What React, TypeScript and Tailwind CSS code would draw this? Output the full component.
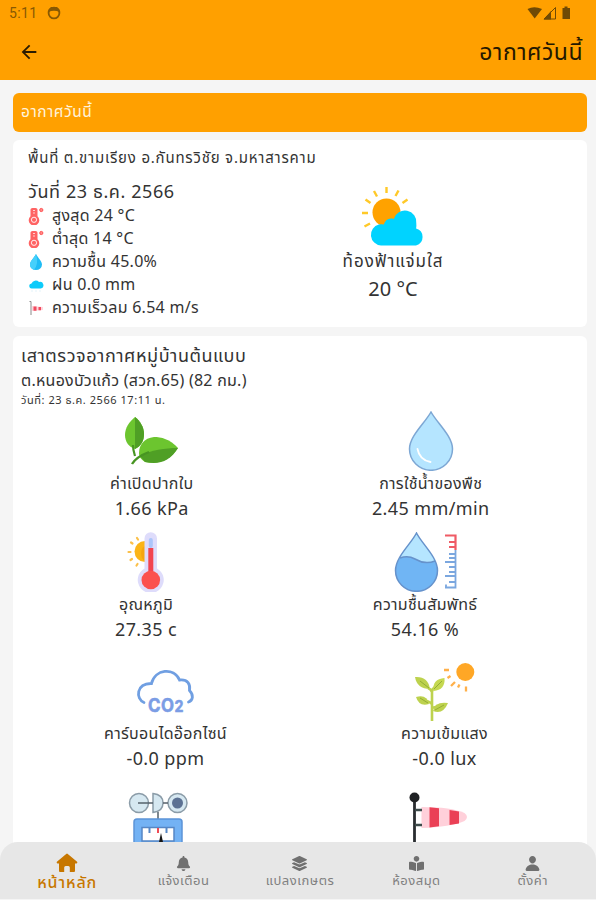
import type { ReactNode } from "react";
import { FaBell, FaBookReader, FaLayerGroup } from "react-icons/fa";
import { IoPerson } from "react-icons/io5";
import { MdArrowBack } from "react-icons/md";

function StatusBar() {
  return (
    <div className="flex h-[26px] items-center pl-[9px] pr-6 text-[#885903]">
      <span className="font-['Roboto',sans-serif] text-[14px] tracking-[0.4px]">5:11</span>
      <svg viewBox="0 0 14 14" className="ml-[9px] size-[14px]">
        <circle cx="7" cy="7" r="5.4" fill="none" stroke="currentColor" strokeWidth="1.8" />
        <path d="M1.500 6V3.500L4 1h6l2.500 2.500V6Q7 3.500 1.500 6Z" fill="currentColor" />
      </svg>
      <svg viewBox="0 0 46 16" className="ml-auto mr-[-1px] h-4 w-[46px] text-[#704a05]">
        <path d="M0.500 4Q7 .500 15 4L7.700 13.500Z" fill="currentColor" />
        <path d="M17 14 28.500 2.500V14Z" fill="none" stroke="currentColor" strokeWidth="1" />
        <path d="M16.500 14.500 24 6V14.500Z" fill="currentColor" />
        <path d="M35.500 3h2V1.500h3V3h2.500V14H35.500Z" fill="currentColor" />
      </svg>
    </div>
  );
}

function Header() {
  return (
    <header className="h-20 shrink-0 bg-[#ffa000]">
      <StatusBar />
      <div className="flex h-[51px] items-center justify-between pl-[18px] pr-[13px]">
        <MdArrowBack className="size-[22px] text-[#2b1c00]" />
        <h1 className="text-[23px] tracking-[0.5px] text-[#241800]">อากาศวันนี้</h1>
      </div>
    </header>
  );
}

function ThermoSmall() {
  return (
    <svg viewBox="0 0 16 18" className="size-full">
      <path d="M2.500 2.500Q2.500 1 4.500 1h3q2 0 2 1.500V9.200a5.300 5.300 0 1 1-7 0Z" fill="#ff6363" />
      <path d="M5 3.500h2M5 6h2" stroke="#ffd0d0" strokeWidth="1" />
      <circle cx="6" cy="12.800" r="2.600" fill="none" stroke="#fff" strokeWidth=".9" />
      <circle cx="13.300" cy="3" r="1.600" fill="#ff8a8a" stroke="#ff5252" />
    </svg>
  );
}

function DropSmall() {
  return (
    <svg viewBox="0 0 16 18" className="size-full">
      <path d="M8 1C6 5 2 8 2 11.500a6 5.500 0 0 0 12 0C14 8 10 5 8 1Z" fill="#1fbcf5" />
      <path d="M8 1C6 5 2 8 2 11.500a6 5.500 0 0 0 4 5.200Q11 11 8 1Z" fill="#45d0fb" />
    </svg>
  );
}

function CloudSmall() {
  return (
    <svg viewBox="0 0 16 18" className="size-full">
      <path d="M4 12.500a2.500 2.500 0 0 1-.5-5A4.500 4.500 0 0 1 11 6a3.300 3.300 0 0 1 2 6.500Z" fill="#0ecbfa" />
      <path d="M4 14v2M8 14v2M12 14v2" stroke="#e3f3fa" strokeWidth="1" />
    </svg>
  );
}

function WindSmall() {
  return (
    <svg viewBox="0 0 16 18" className="size-full">
      <path d="M1.500 2.500H3V16" fill="none" stroke="#8a8a8a" strokeWidth="1" />
      <path d="M4 7 15 8v3L4 12Z" fill="#ffd5dc" />
      <path d="M5.500 7.500h3v4.300h-3ZM10.500 8h2.500v3.300h-2.500Z" fill="#f04a5e" />
    </svg>
  );
}

function PartlyCloudy() {
  return (
    <svg viewBox="0 0 62 60" className="h-[60px] w-[62px]">
      <path
        d="M24.500 0v6M36.500 3.500l-3 5.500M45.500 12.500l-5 3.500M12 4l3 5.500M3.500 12.500l5 3.500M0 26h6M2.500 39.500l5.500-3"
        stroke="#ffc928"
        strokeWidth="2.400"
      />
      <circle cx="24.500" cy="25.500" r="14" fill="#ffa200" />
      <path
        d="M19 58.500a10.700 10.700 0 0 1-2.200-21q2.500-.6 5 0c1.500-5 5.500-7 10-5.500a11.500 11.500 0 0 1 22.500 4.500q.3 2.500-.2 5a8.800 8.800 0 0 1-.1 17Z"
        fill="#00d3ff"
      />
    </svg>
  );
}

function LeavesIcon() {
  return (
    <svg viewBox="0 0 60 60" className="size-full overflow-visible">
      <path d="M13 6C7 11 3 17 3 24c0 7 4 12 10 14 6-3 9-8 9-15C22 16 18 10 13 6Z" fill="#6cc52f" />
      <path d="M13 6C18 10 22 16 22 23c0 7-3 12-9 15Z" fill="#4f9f25" />
      <path d="M11 34q0 5 2 11" fill="none" stroke="#479522" strokeWidth="2.200" />
      <path d="M56 37C48 28 39 26 32 26c-10 1-15 8-15 16 0 4 2 6 6 9 14 3 26-3 33-14Z" fill="#6cc52f" />
      <path d="M56 37C48 50 38 54 23 51l-5-6C29 39 43 37 56 37Z" fill="#4f9f25" />
      <path d="M10 53c3-5 9-9 17-12" fill="none" stroke="#479522" strokeWidth="2.400" />
    </svg>
  );
}

function DropIcon() {
  return (
    <svg viewBox="0 0 60 60" className="size-full">
      <path
        d="M30 1C24 12 8.500 25 8.500 38a21.500 21.300 0 0 0 43 0C51.500 25 36 12 30 1Z"
        fill="#b5e5ff"
        stroke="#7da7d4"
        strokeWidth="1.500"
      />
      <path d="M16.500 38q2 11 13 13" fill="none" stroke="#fff" strokeWidth="1.800" strokeLinecap="round" />
    </svg>
  );
}

function ThermometerIcon() {
  return (
    <svg viewBox="0 0 60 60" className="size-full">
      <path d="M29 9a10.500 10.500 0 0 0 0 21Z" fill="#fbb416" />
      <path d="M29 14a6 8 0 0 0 0 15Z" fill="#f5a511" />
      <path
        d="M21 6l1 1.500M15 10.500l1.500 1M12.500 20h2M14.500 28l1.500-1M20.500 33.500l1-1.500"
        stroke="#fbc04a"
        strokeWidth="2.200"
        strokeLinecap="round"
      />
      <path d="M28.500 6.500a6 6 0 0 1 12.500 0V36.500a13 13 0 1 1-12.500 0Z" fill="#dedcfb" />
      <path d="M34.800 8v6" stroke="#abc5fa" strokeWidth="4" strokeLinecap="round" />
      <path d="M34.800 16v28" stroke="#f24450" strokeWidth="5" />
      <circle cx="34.800" cy="48" r="9.300" fill="#fb504f" />
    </svg>
  );
}

function HumidityIcon() {
  return (
    <svg viewBox="0 0 64 60" className="size-full">
      <path d="M23.500 1C18 12 2.500 25 2.500 38.500a21 20.800 0 0 0 42 0C44.500 25 29 12 23.500 1Z" fill="#b5e5ff" />
      <path d="M7 26q8-3 15 1 10 6 20 2 2.500 5 2.500 10a21 20.500 0 0 1-42 0Q2.500 32 7 26Z" fill="#70b5f4" />
      <path
        d="M23.500 1C18 12 2.500 25 2.500 38.500a21 20.800 0 0 0 42 0C44.500 25 29 12 23.500 1ZM7 26q8-3 15 1 10 6 20 2"
        fill="none"
        stroke="#6692cb"
        strokeWidth="1.500"
      />
      <path d="M52 3.500h10.500V18M56 10h6M56 15h6" fill="none" stroke="#ef5b65" strokeWidth="2.200" />
      <path
        d="M62.500 18V55.500H52M56 22h6M56 26h6M52 30h10M56 35h6M56 40h6M52 44h10M56 50h6M53 52.500v3"
        fill="none"
        stroke="#7ba7df"
        strokeWidth="1.800"
      />
    </svg>
  );
}

function Co2Icon() {
  return (
    <svg viewBox="0 0 60 60" className="size-full">
      <path
        d="M8 41.500C-.500 38 0 22 15.500 22.500 19 8 38 6 43.500 19c8.500-1 11 4.500 10 10.500 4.500 4.500 3.500 10-1 11.500"
        fill="none"
        stroke="#709fe2"
        strokeWidth="2.800"
        strokeLinecap="round"
      />
      <text
        x="12"
        y="51"
        textLength="36"
        lengthAdjust="spacingAndGlyphs"
        fill="#7b9de5"
        stroke="#7b9de5"
        strokeWidth=".6"
        className="font-['Inter',sans-serif] text-[19px] font-bold tracking-[0.6px]"
      >
        CO<tspan className="text-[16px]">2</tspan>
      </text>
    </svg>
  );
}

function PlantIcon() {
  return (
    <svg viewBox="0 0 60 60" className="size-full">
      <path d="M17 60V31q0-3 3-5M17 31q-1-3-4-4M17 47q5-1 6-3M17 43q-2-2-5-3" fill="none" stroke="#bdd24e" strokeWidth="2.600" />
      <path d="M0 16q13-1 15 12Q2 28 0 16Z" fill="#bdd24e" />
      <path d="M29.500 17q1 12-11 13Q17 18 29.500 17Z" fill="#c5d850" />
      <path d="M1 36q11-3 13 7Q4 46 1 36Z" fill="#bdd24e" />
      <path d="M33 42q-5 12-15 8 2-10 15-8Z" fill="#bdd24e" />
      <path d="m5 20 9 7M27 20l-8 8M5 37l8 5M29 44l-9 5" stroke="#94ad35" strokeWidth="1" />
      <circle cx="50.300" cy="11" r="9" fill="#ffa726" />
      <path d="M29 9h5M32.500 17l3-2M36 25l4-4M43 26.500l1.500-3M51 30.500v-5" stroke="#ffb04a" strokeWidth="2.300" />
    </svg>
  );
}

function AnemometerIcon() {
  return (
    <svg viewBox="0 0 60 60" className="size-full overflow-visible">
      <g fill="#d6e8f1" stroke="#8b9ca8" strokeWidth="1.500">
        <circle cx="12" cy="13" r="9.500" />
        <circle cx="50.500" cy="13" r="9.500" />
        <path d="M26 3.500q10 1 10 9.500t-10 9.500Z" />
      </g>
      <path d="M11 13h15M36 13h5M31 22v7" stroke="#55616b" strokeWidth="1.500" />
      <circle cx="50.500" cy="13" r="5.500" fill="#5c7193" />
      <rect x="7" y="29" width="48" height="40" rx="3" fill="#73b2f4" stroke="#5c94d8" strokeWidth="1.500" />
      <path d="M15 37.500h32V51H15Z" fill="#fff" stroke="#5687c5" strokeWidth="1.500" />
      <path d="M22.500 38v5M39.500 38v5" stroke="#5687c5" strokeWidth="2" />
      <path d="M31 38v5" stroke="#ef4b56" strokeWidth="2" />
      <path d="m34 43 2 9h-4Z" fill="#151515" />
    </svg>
  );
}

function WindsockIcon() {
  return (
    <svg viewBox="0 0 60 60" className="size-full overflow-visible">
      <path d="M15.500 17q30 0 43 6 5 4 0 8-14 6-43 7Z" fill="#ffd0da" />
      <path d="m23.500 17.200 9.500 1v18l-9.500 1.300ZM43.500 20l9.500 1.500v12L43.500 35Z" fill="#ea4056" />
      <path d="M8.500 8v50" stroke="#2a2d30" strokeWidth="2.800" />
      <path d="M9 20h7M9 35h7" stroke="#3d4b4b" strokeWidth="2.400" />
      <circle cx="8.500" cy="7.500" r="5" fill="#202224" />
    </svg>
  );
}

function HomeIcon() {
  return (
    <svg viewBox="0 0 22 20" className="h-5 w-[22px]">
      <path
        d="M10.200.9q.8-.7 1.600 0l9.300 7.900q.8 1.200-.5 1.700H19V18q0 1-1 1h-4.200v-4.500q0-1.500-1.500-1.500H9.700q-1.500 0-1.500 1.500V19H4q-1 0-1-1v-7.500H1.400Q.1 10 .9 8.800Z"
        fill="currentColor"
      />
    </svg>
  );
}

function ForecastLine({ icon, children }: { icon: ReactNode; children: string }) {
  return (
    <li className="flex h-[23px] items-center">
      <span className="mr-[8px] h-[18px] w-4">{icon}</span>
      <span className="whitespace-nowrap text-[16px] leading-[23px] tracking-[0.28px]">{children}</span>
    </li>
  );
}

function ForecastCard() {
  return (
    <section className="mt-2 flex h-[187px] rounded-[6px] bg-white pl-[15px] pt-[7px]">
      <div className="w-[284px]">
        <p className="h-[22px] whitespace-nowrap text-[15px] leading-[21px] tracking-[0.8px]">
          พื้นที่ ต.ขามเรียง อ.กันทรวิชัย จ.มหาสารคาม
        </p>
        <p className="mt-[10px] h-[25px] whitespace-nowrap text-[18px] leading-[25px] tracking-[0.6px]">
          วันที่ 23 ธ.ค. 2566
        </p>
        <ul>
          <ForecastLine icon={<ThermoSmall />}>สูงสุด 24 °C</ForecastLine>
          <ForecastLine icon={<ThermoSmall />}>ต่ำสุด 14 °C</ForecastLine>
          <ForecastLine icon={<DropSmall />}>ความชื้น 45.0%</ForecastLine>
          <ForecastLine icon={<CloudSmall />}>ฝน 0.0 mm</ForecastLine>
          <ForecastLine icon={<WindSmall />}>ความเร็วลม 6.54 m/s</ForecastLine>
        </ul>
      </div>
      <div className="flex w-[162px] flex-col items-center pt-10">
        <PartlyCloudy />
        <p className="mt-px h-[26px] whitespace-nowrap text-[17px] leading-[25px] tracking-[1px]">ท้องฟ้าแจ่มใส</p>
        <p className="h-[30px] text-[20px] leading-[30px]">20 °C</p>
      </div>
    </section>
  );
}

type ReadingProps = { icon: ReactNode; label: string; value: string; width: string; wide?: boolean };

function Reading({ icon, label, value, width, wide }: ReadingProps) {
  return (
    <div className={`flex flex-col items-center whitespace-nowrap ${width}`}>
      <div className={wide ? "h-[60px] w-16" : "size-[60px]"}>{icon}</div>
      <p className="h-6 text-[16px] leading-6 tracking-[0.3px]">{label}</p>
      <p className="h-[26px] text-[18px] leading-[26px] tracking-[0.4px]">{value}</p>
    </div>
  );
}

function StationCard() {
  return (
    <section className="mt-[9px] h-[600px] rounded-[6px] bg-white px-2 pt-2">
      <h2 className="h-6 whitespace-nowrap text-[18px] leading-[23px] tracking-[0.54px]">เสาตรวจอากาศหมู่บ้านต้นแบบ</h2>
      <p className="h-[25px] whitespace-nowrap text-[16px] leading-[25px] tracking-[0.25px]">
        ต.หนองบัวแก้ว (สวก.65) (82 กม.)
      </p>
      <p className="h-[18px] whitespace-nowrap text-[11px] leading-[14px] tracking-[0.55px]">
        วันที่: 23 ธ.ค. 2566 17:11 น.
      </p>
      <div className="flex h-[121px] justify-around">
        <Reading icon={<LeavesIcon />} label="ค่าเปิดปากใบ" value="1.66 kPa" width="w-[83px]" />
        <Reading icon={<DropIcon />} label="การใช้น้ำของพืช" value="2.45 mm/min" width="w-[118px]" />
      </div>
      <div className="flex h-[129px] justify-around">
        <Reading icon={<ThermometerIcon />} label="อุณหภูมิ" value="27.35 c" width="w-[62px]" />
        <Reading icon={<HumidityIcon />} label="ความชื้นสัมพัทธ์" value="54.16 %" width="w-[120px]" wide />
      </div>
      <div className="flex h-[129px] justify-around">
        <Reading icon={<Co2Icon />} label="คาร์บอนไดอ๊อกไซน์" value="-0.0 ppm" width="w-[122px]" />
        <Reading icon={<PlantIcon />} label="ความเข้มแสง" value="-0.0 lux" width="w-[102px]" />
      </div>
      <div className="flex justify-around">
        <div className="flex w-[86px] justify-center">
          <div className="size-[60px]"><AnemometerIcon /></div>
        </div>
        <div className="flex w-[100px] justify-center">
          <div className="size-[60px]"><WindsockIcon /></div>
        </div>
      </div>
    </section>
  );
}

function NavItem({ icon, label }: { icon: ReactNode; label: string }) {
  return (
    <a className="flex flex-col items-center whitespace-nowrap pt-[13px] text-[#707070]">
      <span className="flex h-4 items-center">{icon}</span>
      <span className="mt-px text-[13px] leading-4 tracking-[0.5px] text-[#808080]">{label}</span>
    </a>
  );
}

function BottomNav() {
  return (
    <nav className="relative -mt-4 mb-px grid h-[57px] shrink-0 grid-cols-5 rounded-t-[18px] bg-[#e7e7e7] pl-[9px] pr-[5px]">
      <a className="flex flex-col items-center whitespace-nowrap pt-[11px] text-[#c77700]">
        <HomeIcon />
        <span className="mt-px text-[16px] font-medium leading-[16px] tracking-[0.9px]">หน้าหลัก</span>
      </a>
      <NavItem icon={<FaBell className="size-[15px]" />} label="แจ้งเตือน" />
      <NavItem icon={<FaLayerGroup className="size-[15px]" />} label="แปลงเกษตร" />
      <NavItem icon={<FaBookReader className="size-[15px]" />} label="ห้องสมุด" />
      <NavItem icon={<IoPerson className="size-[17px]" />} label="ตั้งค่า" />
    </nav>
  );
}

export default function App() {
  return (
    <div className="flex h-screen flex-col overflow-hidden bg-[#f5f5f5] font-['Noto_Sans','Noto_Sans_Thai',sans-serif] text-[#333]">
      <Header />
      <main className="min-h-0 flex-1 overflow-hidden pl-[13px] pr-[9px] pt-[13px]">
        <div className="flex h-[39px] items-center rounded-[6px] bg-[#ffa000] pb-0.5 pl-2 text-[15.5px] tracking-[0.5px] text-[#fff3dc]">
          อากาศวันนี้
        </div>
        <ForecastCard />
        <StationCard />
      </main>
      <BottomNav />
    </div>
  );
}
